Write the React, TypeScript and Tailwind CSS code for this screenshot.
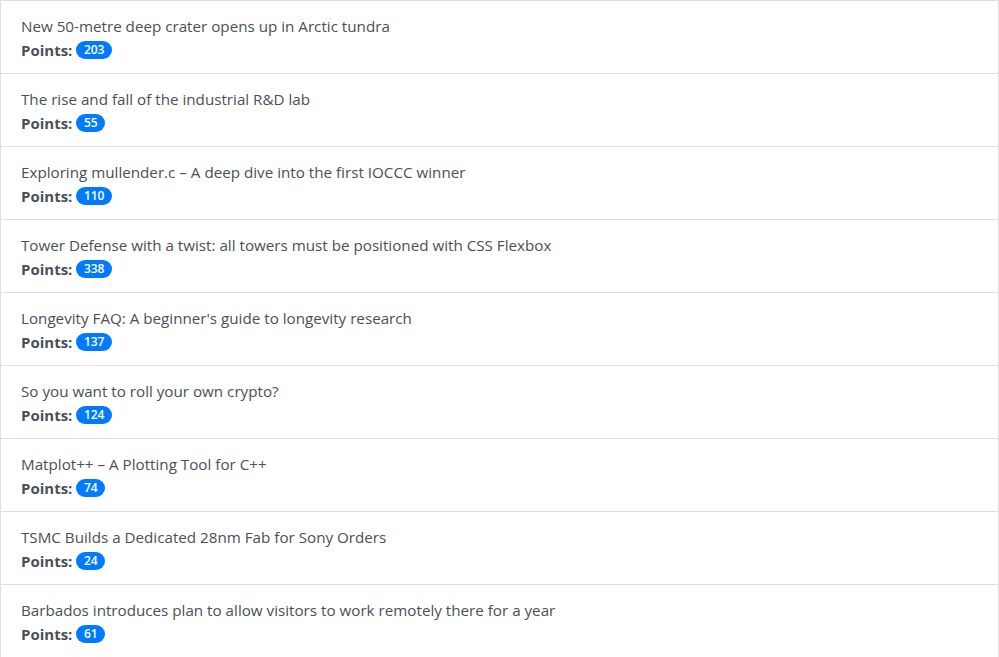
const stories = [
  { title: "New 50-metre deep crater opens up in Arctic tundra", points: 203 },
  { title: "The rise and fall of the industrial R&D lab", points: 55 },
  { title: "Exploring mullender.c – A deep dive into the first IOCCC winner", points: 110 },
  { title: "Tower Defense with a twist: all towers must be positioned with CSS Flexbox", points: 338 },
  { title: "Longevity FAQ: A beginner's guide to longevity research", points: 137 },
  { title: "So you want to roll your own crypto?", points: 124 },
  { title: "Matplot++ – A Plotting Tool for C++", points: 74 },
  { title: "TSMC Builds a Dedicated 28nm Fab for Sony Orders", points: 24 },
  { title: "Barbados introduces plan to allow visitors to work remotely there for a year", points: 61 },
];

export default function App() {
  return (
    <div className="bg-white font-['Open_Sans',sans-serif]">
      <ul className="flex flex-col">
        {stories.map((s, i) => (
          <li
            key={i}
            className="border border-[#dfdfdf] -mt-px first:mt-0 px-5 pt-[13px] pb-[11px] text-[15.2px] leading-6 text-[#495057]"
          >
            <div>{s.title}</div>
            <div className="flex items-center gap-1">
              <span className="font-bold text-[15px]">Points:</span>
              <span className="rounded-full bg-[#007bff] text-white text-[12px] leading-none font-semibold px-[7.5px] py-[3px]">
                {s.points}
              </span>
            </div>
          </li>
        ))}
      </ul>
    </div>
  );
}
